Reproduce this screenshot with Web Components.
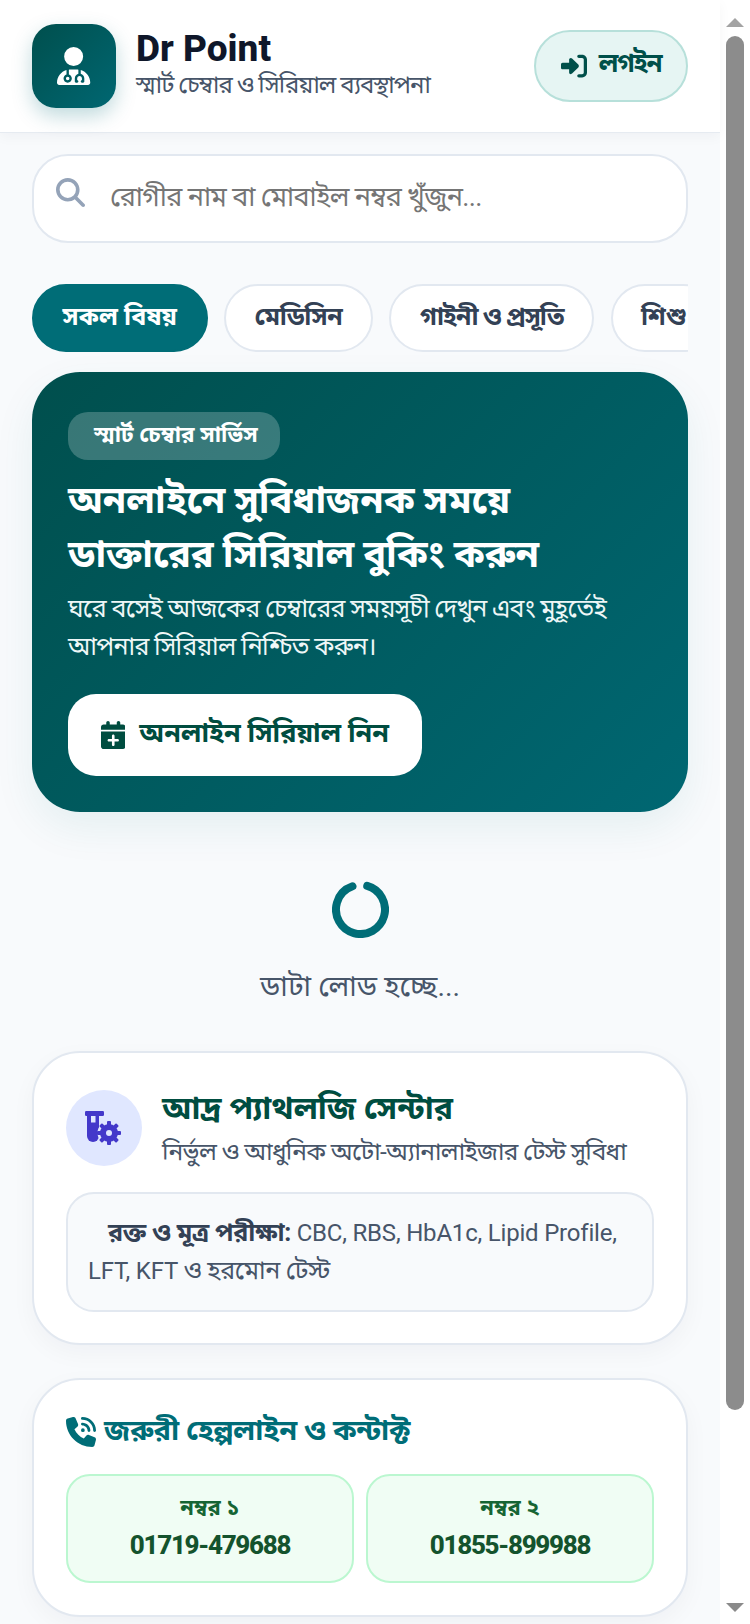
<!DOCTYPE html>
<html lang="bn">
<head>
<meta charset="utf-8">
<title>Dr Point</title>
<style>
    html, body { margin: 0; padding: 0; height: 100%; overflow: hidden; background: #f8fafc; }
    body {
        font-family: Roboto, "Noto Sans", "Noto Sans Bengali", sans-serif;
        color: #0f172a;
    }
    app-shell { height: 1624px; }
</style>
</head>
<body>
<app-shell>
    <top-header slot="head"></top-header>
    <search-box placeholder="রোগীর নাম বা মোবাইল নম্বর খুঁজুন..."></search-box>
    <chip-row>
        <filter-chip active>সকল বিষয়</filter-chip>
        <filter-chip style="letter-spacing:-.4px">মেডিসিন</filter-chip>
        <filter-chip style="letter-spacing:-1px">গাইনী ও প্রসূতি</filter-chip>
        <filter-chip>শিশু</filter-chip>
    </chip-row>
    <hero-card></hero-card>
    <load-spinner>ডাটা লোড হচ্ছে...</load-spinner>
    <lab-card></lab-card>
    <helpline-card>
        <phone-tile label="নম্বর ১" number="01719-479688"></phone-tile>
        <phone-tile label="নম্বর ২" number="01855-899988"></phone-tile>
    </helpline-card>
</app-shell>

<script>
// font awesome style glyphs, drawn inline because there is no network
const icons = {
    doctor: [448, "M224 256A128 128 0 1 0 224 0a128 128 0 1 0 0 256zm-96 55.2C54 332.9 0 401.3 0 482.3C0 498.7 13.3 512 29.7 512H418.3c16.4 0 29.7-13.3 29.7-29.7c0-81-54-149.4-128-171.1V362c27.6 7.1 48 32.2 48 62v40c0 8.8-7.2 16-16 16H336c-8.8 0-16-7.2-16-16s7.2-16 16-16V424c0-17.7-14.3-32-32-32s-32 14.3-32 32v24c8.8 0 16 7.2 16 16s-7.2 16-16 16H256c-8.8 0-16-7.2-16-16V424c0-29.8 20.4-54.9 48-62V304.9c-6-.6-12.1-.9-18.3-.9H178.3c-6.2 0-12.3 .3-18.3 .9v65.4c23.1 6.9 40 28.3 40 53.7c0 30.9-25.1 56-56 56s-56-25.1-56-56c0-25.4 16.9-46.8 40-53.7V311.2zM144 448a24 24 0 1 0 0-48 24 24 0 1 0 0 48z"],
    login: [512, "M217.9 105.9L340.7 228.7c7.2 7.2 11.3 17.1 11.3 27.3s-4.1 20.1-11.3 27.3L217.9 406.1c-6.4 6.4-15 9.9-24 9.9c-18.7 0-33.9-15.2-33.9-33.9l0-62.1L32 320c-17.7 0-32-14.3-32-32l0-64c0-17.7 14.3-32 32-32l128 0 0-62.1c0-18.7 15.2-33.9 33.9-33.9c9 0 17.6 3.6 24 9.9zM352 416l64 0c17.7 0 32-14.3 32-32l0-256c0-17.7-14.3-32-32-32l-64 0c-17.7 0-32-14.3-32-32s14.3-32 32-32l64 0c53 0 96 43 96 96l0 256c0 53-43 96-96 96l-64 0c-17.7 0-32-14.3-32-32s14.3-32 32-32z"],
    search: [512, "M416 208c0 45.9-14.9 88.3-40 122.7L502.6 457.4c12.5 12.5 12.5 32.8 0 45.3s-32.8 12.5-45.3 0L330.7 376c-34.4 25.2-76.8 40-122.7 40C93.1 416 0 322.9 0 208S93.1 0 208 0S416 93.1 416 208zM208 352a144 144 0 1 0 0-288 144 144 0 1 0 0 288z"],
    calendar: [448, "M96 32V64H48C21.5 64 0 85.5 0 112v48H448V112c0-26.5-21.5-48-48-48H352V32c0-17.7-14.3-32-32-32s-32 14.3-32 32V64H160V32c0-17.7-14.3-32-32-32S96 14.3 96 32zM448 192H0V464c0 26.5 21.5 48 48 48H400c26.5 0 48-21.5 48-48V192zM224 248c13.3 0 24 10.7 24 24v56h56c13.3 0 24 10.7 24 24s-10.7 24-24 24H248v56c0 13.3-10.7 24-24 24s-24-10.7-24-24V376H144c-13.3 0-24-10.7-24-24s10.7-24 24-24h56V272c0-13.3 10.7-24 24-24z"],
    phone: [512, "M280 0C408.1 0 512 103.9 512 232c0 13.3-10.7 24-24 24s-24-10.7-24-24c0-101.6-82.4-184-184-184c-13.3 0-24-10.7-24-24s10.7-24 24-24zm8 192a32 32 0 1 1 0 64 32 32 0 1 1 0-64zm-32-72c0-13.3 10.7-24 24-24c75.1 0 136 60.9 136 136c0 13.3-10.7 24-24 24s-24-10.7-24-24c0-48.6-39.4-88-88-88c-13.3 0-24-10.7-24-24zM117.5 1.4c19.4-5.3 39.7 4.6 47.4 23.2l40 96c6.8 16.3 2.1 35.2-11.6 46.3L144 207.3c33.3 70.4 90.3 127.4 160.7 160.7L345 318.7c11.2-13.7 30-18.4 46.3-11.6l96 40c18.6 7.7 28.5 28 23.2 47.4l-24 88C481.8 499.9 466 512 448 512C200.6 512 0 311.4 0 64C0 46 12.1 30.2 29.5 25.4l88-24z"],
};

const icon = (name, height) => {
    const [w, d] = icons[name];
    return `<svg viewBox="0 0 ${w} 512" height="${height}" fill="currentColor" style="display:block;flex:none"><path d="${d}"/></svg>`;
};

const define = (name, markup) => {
    customElements.define(name, class extends HTMLElement {
        constructor() {
            super();
            this.attachShadow({mode: 'open'});
            const tpl = document.createElement('template');
            tpl.innerHTML = typeof markup === 'function' ? markup(this) : markup;
            this.shadowRoot.appendChild(tpl.content.cloneNode(true));
        }
    });
};

define('app-shell', `
    <style>
        :host { display: flex; background: #f8fafc; overflow: hidden; }
        #page { width: 720px; flex: none; display: flex; flex-direction: column; }
        #content { padding: 0 32px; display: flex; flex-direction: column; }
        #bar { width: 30px; flex: none; background: #fff; display: flex; flex-direction: column; align-items: center; }
        #up, #down { width: 0; height: 0; border-left: 9px solid transparent; border-right: 9px solid transparent; flex: none; }
        #up { border-bottom: 9px solid #a3a3a3; margin-top: 18px; }
        #down { border-top: 9px solid #8a8a8a; margin-top: auto; margin-bottom: 12px; }
        #thumb { width: 18px; height: 1374px; margin-top: 9px; background: #8c8c8c; border-radius: 9px; flex: none; }
    </style>
    <div id="page"><slot name="head"></slot><div id="content"><slot></slot></div></div>
    <div id="bar"><div id="up"></div><div id="thumb"></div><div id="down"></div></div>
`);

define('top-header', `
    <style>
        :host { display: flex; align-items: center; box-sizing: border-box; height: 133px; padding: 0 32px 1px;
            background: #fff; border-bottom: 1px solid #e6ebf1; box-shadow: 0 4px 12px rgba(15,23,42,.04); position: relative; }
        #logo { width: 84px; height: 84px; border-radius: 24px; flex: none; display: flex; align-items: center; justify-content: center;
            background: linear-gradient(135deg, #004f4d, #006772); color: #fff; box-shadow: 0 8px 20px rgba(0,109,119,.25); }
        #names { margin: 1px 0 0 20px; flex: 1; display: flex; flex-direction: column; min-width: 0; }
        #title { font-size: 37px; font-weight: 800; line-height: 38px; color: #0f172a; }
        #sub { font-size: 24px; line-height: 34px; color: #475569; white-space: nowrap; letter-spacing: -1px; }
        #login { box-sizing: border-box; width: 154px; height: 72px; border-radius: 36px; background: #e6f5f3; border: 2px solid #b7e0da;
            display: flex; align-items: center; justify-content: center; gap: 12px; color: #00504a; font-size: 26px; font-weight: 700; letter-spacing: -1.4px; }
    </style>
    <div id="logo">${icon('doctor', 38)}</div>
    <div id="names"><div id="title">Dr Point</div><div id="sub">স্মার্ট চেম্বার ও সিরিয়াল ব্যবস্থাপনা</div></div>
    <div id="login">${icon('login', 26)}<span>লগইন</span></div>
`);

define('search-box', el => `
    <style>
        :host { display: block; margin-top: 21px; }
        label { box-sizing: border-box; height: 89px; display: flex; align-items: center; gap: 25px; padding: 0 22px;
            background: #fff; border: 2px solid #e2e8f0; border-radius: 36px; }
        svg { color: #94a3b8; margin-top: -12px; }
        input { flex: 1; border: 0; outline: 0; background: none; padding: 0 0 4px; font: inherit; font-size: 27px; letter-spacing: -.7px; color: #0f172a; min-width: 0; }
        input::placeholder { color: #757575; opacity: 1; }
    </style>
    <label>${icon('search', 29)}<input type="text" placeholder="${el.getAttribute('placeholder')}"></label>
`);

define('chip-row', `
    <style>
        :host { display: flex; gap: 16.5px; margin-top: 41px; overflow: hidden; }
    </style>
    <slot></slot>
`);

define('filter-chip', `
    <style>
        :host { display: flex; align-items: center; box-sizing: border-box; height: 68px; padding: 0 28.5px; flex: none;
            border: 2px solid #e2e8f0; border-radius: 34px; background: #fff; color: #334155; font-size: 25px; font-weight: 700; white-space: nowrap; }
        :host([active]) { background: #006d77; border-color: #006d77; color: #fff; }
    </style>
    <slot></slot>
`);

define('hero-card', `
    <style>
        :host { display: flex; flex-direction: column; align-items: flex-start; box-sizing: border-box; height: 440px; margin-top: 20px; padding: 40px 36px 0;
            border-radius: 48px; background: linear-gradient(135deg, #004f4d, #006772); color: #fff;
            box-shadow: 0 16px 40px rgba(0,109,119,.08); }
        #tag { box-sizing: border-box; height: 48px; width: 212px; padding-left: 26px; display: flex; align-items: center; border-radius: 20px;
            background: rgba(255,255,255,.22); font-size: 22.5px; font-weight: 700; white-space: nowrap; }
        h2 { margin: 13px 0 0; font-size: 38px; line-height: 54px; font-weight: 700; white-space: nowrap; letter-spacing: -.15px; }
        p { margin: 9px 0 0; font-size: 25px; line-height: 38px; color: #eef7f7; letter-spacing: -.72px; white-space: nowrap; }
        #cta { box-sizing: border-box; height: 82px; width: 354px; margin-top: 28px; display: flex; align-items: center; justify-content: center; gap: 14px; flex: none;
            background: #fff; border-radius: 28px; color: #004d40; font-size: 27px; font-weight: 700; white-space: nowrap; }
    </style>
    <div id="tag">স্মার্ট চেম্বার সার্ভিস</div>
    <h2>অনলাইনে সুবিধাজনক সময়ে<br>ডাক্তারের সিরিয়াল বুকিং করুন</h2>
    <p>ঘরে বসেই আজকের চেম্বারের সময়সূচী দেখুন এবং মুহূর্তেই<br>আপনার সিরিয়াল নিশ্চিত করুন।</p>
    <div id="cta">${icon('calendar', 28)}<span>অনলাইন সিরিয়াল নিন</span></div>
`);

define('load-spinner', `
    <style>
        :host { display: flex; flex-direction: column; align-items: center; margin-top: 69px; color: #475569; font-size: 28.5px; }
        svg { display: block; }
        div { margin-top: 25px; line-height: 48px; }
    </style>
    <svg width="57" height="57" viewBox="0 0 57 57"><circle cx="28.5" cy="28.5" r="24.5" fill="none" stroke="#006d77" stroke-width="8" stroke-linecap="round" stroke-dasharray="138 16" transform="rotate(-74 28.5 28.5)"/></svg>
    <div><slot></slot></div>
`);

define('lab-card', `
    <style>
        :host { display: block; box-sizing: border-box; height: 294px; margin-top: 40px; padding: 32px 32px 0;
            background: #fff; border: 2px solid #e2e8f0; border-radius: 48px; box-shadow: 0 8px 24px rgba(15,23,42,.04); }
        #top { display: flex; gap: 20px; }
        #circle { width: 76px; height: 76px; margin-top: 5px; flex: none; border-radius: 50%; background: #e0e7ff; color: #4338ca; display: flex; align-items: center; justify-content: center; }
        h3 { margin: 0; font-size: 32px; line-height: 46px; font-weight: 700; color: #004d40; white-space: nowrap; }
        #sub { font-size: 24.5px; line-height: 42px; color: #475569; white-space: nowrap; letter-spacing: -.72px; }
        #box { box-sizing: border-box; height: 120px; margin-top: 19px; padding: 20px 20px; background: #f8fafc; border: 2px solid #e2e8f0; border-radius: 28px;
            font-size: 24px; letter-spacing: -.2px; line-height: 37px; color: #475569; }
        b { color: #334155; font-weight: 700; margin-left: 20px; font-size: 25px; letter-spacing: -.3px; }
        .bn { font-size: 25px; letter-spacing: -.4px; }
    </style>
    <div id="top">
        <div id="circle">
            <svg width="38" height="38" viewBox="0 0 38 38" fill="currentColor">
                <rect y="2" width="19" height="5" rx="1.2"/>
                <path d="M2 6h12v21a6 6 0 0 1-12 0z"/>
                <rect x="6" y="7" width="4.5" height="6.5" fill="#e0e7ff"/>
                <circle cx="24" cy="24" r="11.5" fill="#e0e7ff"/>
                <g transform="translate(24 24)">
                    <circle r="9"/>
                    <rect x="-2" y="-12" width="4" height="24" rx="1"/>
                    <rect x="-2" y="-12" width="4" height="24" rx="1" transform="rotate(45)"/>
                    <rect x="-2" y="-12" width="4" height="24" rx="1" transform="rotate(90)"/>
                    <rect x="-2" y="-12" width="4" height="24" rx="1" transform="rotate(135)"/>
                    <circle r="3" fill="#e0e7ff"/>
                </g>
            </svg>
        </div>
        <div><h3>আদ্র প্যাথলজি সেন্টার</h3><div id="sub">নির্ভুল ও আধুনিক অটো-অ্যানালাইজার টেস্ট সুবিধা</div></div>
    </div>
    <div id="box"><b>রক্ত ও মূত্র পরীক্ষা:</b> CBC, RBS, HbA1c, Lipid Profile, LFT, KFT <span class="bn">ও হরমোন টেস্ট</span></div>
`);

define('helpline-card', `
    <style>
        :host { display: block; box-sizing: border-box; height: 239px; margin-top: 33px; padding: 30px 32px 0;
            background: #fff; border: 2px solid #e2e8f0; border-radius: 48px; box-shadow: 0 8px 24px rgba(15,23,42,.04); }
        h3 { margin: 0; display: flex; align-items: center; gap: 8px; height: 44px; font-size: 29px; letter-spacing: -.2px; font-weight: 700; color: #006d77; white-space: nowrap; }
        #grid { display: grid; grid-template-columns: 1fr 1fr; gap: 12px; margin-top: 20px; }
    </style>
    <h3>${icon('phone', 30)}<span>জরুরী হেল্পলাইন ও কন্টাক্ট</span></h3>
    <div id="grid"><slot></slot></div>
`);

define('phone-tile', el => `
    <style>
        :host { display: flex; flex-direction: column; align-items: center; justify-content: center; box-sizing: border-box; height: 109px; padding-bottom: 4px;
            background: #f0fdf4; border: 2px solid #bbf7d0; border-radius: 24px; }
        #l { font-size: 22px; line-height: 36px; font-weight: 700; color: #166534; }
        #n { font-size: 26px; line-height: 38px; font-weight: 800; letter-spacing: -1.3px; color: #14532d; }
    </style>
    <div id="l">${el.getAttribute('label')}</div>
    <div id="n">${el.getAttribute('number')}</div>
`);
</script>
</body>
</html>
